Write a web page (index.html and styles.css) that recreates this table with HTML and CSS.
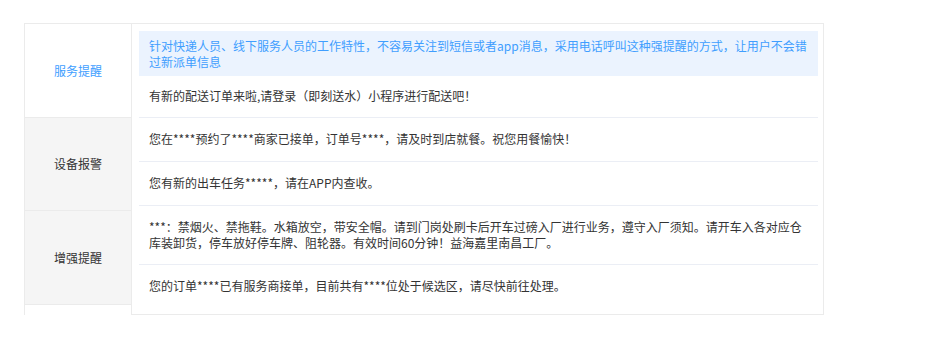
FILE: index.html
```html
<!DOCTYPE html>
<html lang="zh-CN">
<head>
<meta charset="utf-8">
<title>提醒类型</title>
<link rel="stylesheet" href="styles.css">
</head>
<body>
<div class="wrap">
  <div class="labels">
    <div class="label label-active label-first">服务提醒</div>
    <div class="label label-mid">设备报警</div>
    <div class="label label-last">增强提醒</div>
  </div>
  <div class="panel">
    <div class="tip">针对快递人员、线下服务人员的工作特性，不容易关注到短信或者app消息，采用电话呼叫这种强提醒的方式，让用户不会错过新派单信息</div>
    <div class="row row-first">有新的配送订单来啦,请登录（即刻送水）小程序进行配送吧！</div>
    <div class="row">您在****预约了****商家已接单，订单号****，请及时到店就餐。祝您用餐愉快！</div>
    <div class="row">您有新的出车任务*****，请在APP内查收。</div>
    <div class="row row-multi">***：禁烟火、禁拖鞋。水箱放空，带安全帽。请到门岗处刷卡后开车过磅入厂进行业务，遵守入厂须知。请开车入各对应仓库装卸货，停车放好停车牌、阻轮器。有效时间60分钟！益海嘉里南昌工厂。</div>
    <div class="row row-last">您的订单****已有服务商接单，目前共有****位处于候选区，请尽快前往处理。</div>
  </div>
</div>
</body>
</html>
```

FILE: styles.css
```css
html, body {
  margin: 0;
  padding: 0;
  background: #ffffff;
}

body {
  font-family: "Noto Sans CJK SC", "Noto Sans", sans-serif;
  font-size: 12px;
  color: #333333;
}

.wrap {
  display: flex;
  width: 800px;
  margin: 23px 0 0 24px;
}

.labels {
  width: 106px;
  flex: none;
  border-left: 1px solid #ebebeb;
  border-top: 1px solid #ebebeb;
  display: flex;
  flex-direction: column;
}

.label {
  display: flex;
  align-items: center;
  justify-content: center;
  background: #f5f5f5;
  border-bottom: 1px solid #ebebeb;
  color: #333333;
  line-height: 16px;
}

.label-first {
  height: 93px;
  background: #ffffff;
}

.label-mid {
  height: 92px;
}

.label-last {
  height: 93px;
}

.label-active {
  color: #409eff;
}

.panel {
  flex: 1;
  border: 1px solid #ebebeb;
  padding: 7px 5px 6px 7px;
}

.tip {
  background: #ebf3fe;
  color: #409eff;
  line-height: 16px;
  padding: 7px 8px 6px 10px;
}

.row {
  line-height: 16px;
  padding: 13px 8px 14px 10px;
  border-bottom: 1px solid #ebeef5;
}

.row-first {
  padding: 12px 8px 13px 10px;
}

.row-multi {
  padding: 13px 8px 13px 10px;
}

.row-last {
  border-bottom: none;
}
```
